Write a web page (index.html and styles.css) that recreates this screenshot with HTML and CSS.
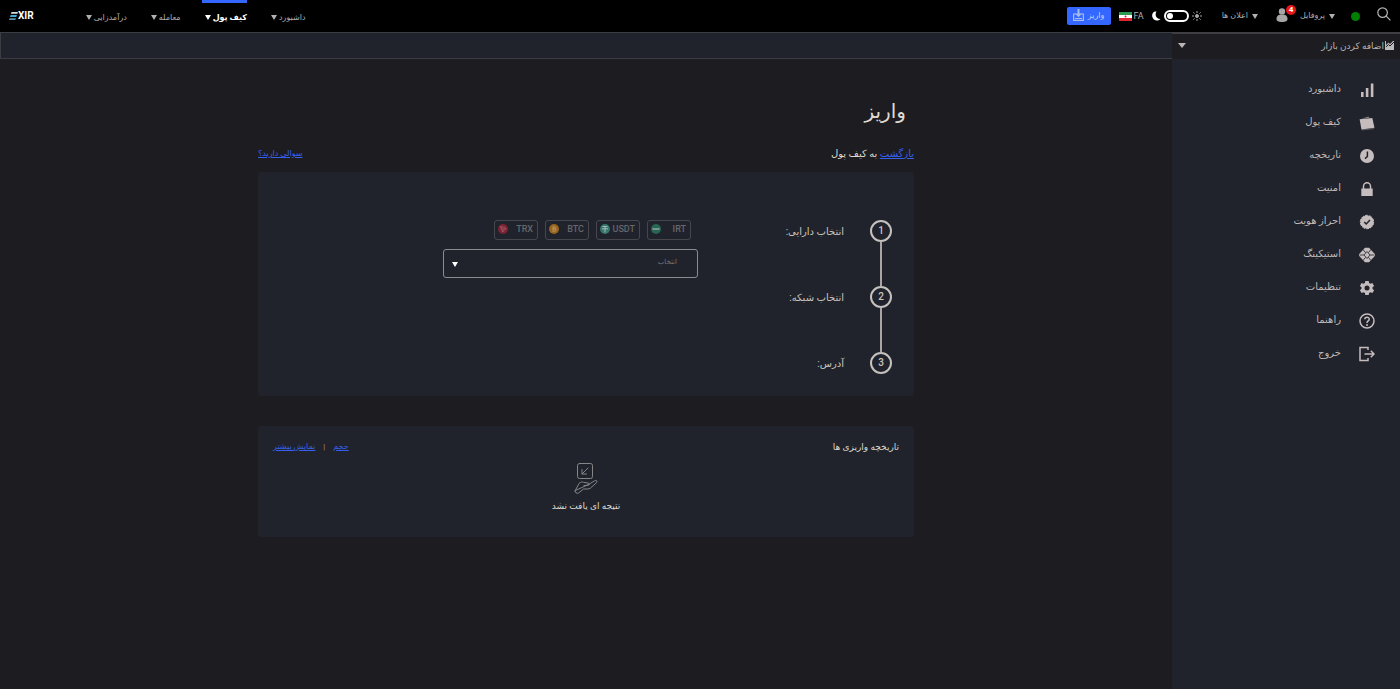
FILE: index.html
```html
<!DOCTYPE html>
<html lang="fa" dir="rtl">
<head>
    <meta charset="UTF-8">
    <meta name="viewport" content="width=device-width, initial-scale=1.0">
    <title>واریز</title>
    <link rel="stylesheet" href="styles.css">
</head>
<body>
    <!-- Top bar -->
    <header class="topbar">
        <div class="tools">
            <button type="button" class="icon-btn" aria-label="جستجو">
                <svg width="14" height="14" viewBox="0 0 14 14" fill="none" stroke="#b4b4b4" stroke-width="1.2"><circle cx="5.6" cy="5.6" r="4.8"/><path d="M9.2 9.2 13.4 13.4"/></svg>
            </button>
            <span class="status"></span>
            <div class="profile">
                <a href="#" class="menu-link">پروفایل</a>
                <span class="avatar">
                    <svg width="12" height="14" viewBox="0 0 12 14" fill="#a6a6a6"><circle cx="6" cy="3.4" r="3.2"/><path d="M0.5 11C0.5 7.8 2.5 6.4 6 6.4s5.500 1.400 5.500 4.600C11.500 13.200 9 14 6 14S0.500 13.200 0.500 11z"/></svg>
                    <span class="badge">4</span>
                </span>
            </div>
            <a href="#" class="menu-link alerts">اعلان ها</a>
            <div class="theme">
                <svg width="10" height="10" viewBox="0 0 10 10" fill="#a6a6a6" stroke="#a6a6a6" stroke-width="1"><circle cx="5" cy="5" r="1.500"/><path d="M5 0v2M5 8v2M0 5h2M8 5h2M1.400 1.400l1.200 1.200M7.400 7.400l1.200 1.200M8.600 1.400 7.400 2.600M2.600 7.400 1.400 8.600"/></svg>
                <input type="checkbox" class="switch" checked aria-label="حالت تاریک">
                <svg width="9" height="10" viewBox="0 0 9 10" fill="#fff"><path d="M4.500 0.500C1 0 -0.300 3 0.300 5.800 1 9.500 5.500 11 8.500 8 5.500 8 4 6.300 3.700 4.300 3.500 2.700 3.800 1.500 4.500 0.500z"/></svg>
            </div>
            <a href="#" class="lang">
                FA
                <svg width="13" height="9" viewBox="0 0 13 9"><path fill="#fff" d="M0 0h13v9H0z"/><path fill="#2c9a50" d="M0 0h13v3H0z"/><path fill="#dc2633" d="M0 6h13v3H0z"/><circle cx="6.500" cy="4.500" r="1" fill="#dc2633"/></svg>
            </a>
            <button type="button" class="deposit-btn">
                واریز
                <svg width="11" height="12" viewBox="0 0 11 12" fill="none" stroke="#a9bce8" stroke-width="1.200"><path d="M3 5H0.600v6.400h9.800V5H8M2 9.500h7"/><path fill="#a9bce8" stroke="none" d="M4.500 0h2v4.500H9L5.500 8.200 2 4.500h2.500z"/></svg>
            </button>
        </div>
        <nav class="main-nav">
            <a href="#">داشبورد</a>
            <a href="#" class="active">کیف پول</a>
            <a href="#">معامله</a>
            <a href="#">درآمدزایی</a>
        </nav>
        <a href="#" class="logo" dir="ltr">
            <svg width="9" height="8" viewBox="0 0 9 8"><path fill="#ddd" d="M2.500 0H9L8.400 1.800H1.900z"/><path fill="#3fa9d6" d="M1.600 3.100h6.300L7.300 4.900H1z"/><path fill="#5d8fa8" d="M0.600 6.200H7L6.400 8H0z"/></svg>XIR
        </a>
    </header>

    <div class="layout">
        <!-- Sidebar -->
        <aside class="sidebar">
            <button type="button" class="add-market">
                <svg width="9" height="9" viewBox="0 0 9 9"><path fill="#bbb" d="M0 0h1v4l2.500-2.500L5 3l3-3h1v9H0z"/><path fill="none" stroke="#1d1c20" stroke-width="1" d="M1 6l2.500-2.500L5 5l4-4"/></svg>
                <span>اضافه کردن بازار</span>
            </button>
            <nav class="side-nav">
                <a href="#">
                    <svg viewBox="0 0 16 16"><path d="M2 10h2.600v5H2zM6.800 6h2.600v9H6.800zM11.800 1.500h2.600V15h-2.600z"/></svg>
                    داشبورد
                </a>
                <a href="#">
                    <svg viewBox="0 0 16 16"><path d="M3 3.500 9.500 1.600l1 1.200L3 3.700z" opacity=".6"/><path d="M.6 4.200 13.300 3l2.200 9.800L2.500 14.400z"/><path d="M3 15l12-1.400" stroke="#c5bcbe" stroke-width=".6" opacity=".6"/></svg>
                    کیف پول
                </a>
                <a href="#">
                    <svg viewBox="0 0 16 16"><circle cx="8" cy="8" r="7"/><path class="cut" d="M8.400 3.500V8.500L6 10.600"/></svg>
                    تاریخچه
                </a>
                <a href="#">
                    <svg viewBox="0 0 16 16"><path d="M2.300 7.500h11.400V15H2.300z"/><path class="line" d="M4.500 8V5.200a3.500 3.500 0 0 1 7 0V8"/></svg>
                    امنیت
                </a>
                <a href="#">
                    <svg viewBox="0 0 16 16"><circle cx="8" cy="8" r="6.600"/><circle cx="8" cy="8" r="6.700" fill="none" stroke="#c5bcbe" stroke-dasharray="3.200 1"/><path class="cut" d="M5.200 8l2 2 3.800-4"/></svg>
                    احراز هویت
                </a>
                <a href="#">
                    <svg viewBox="0 0 16 16"><path d="M6 .8h4L13 4l2.800 3v2L13 12l-3 3.200H6L3 12 .2 9V7L3 4z"/><path class="cut thin" d="M8 4.500 11 8l-3 3.500L5 8zM4 2.500l2.600 3.200M12 2.500 9.400 5.700M4 13.500l2.600-3.200M12 13.500 9.400 10.300M1 8h4M11 8h4"/><circle cx="8" cy="8" r="1.200"/></svg>
                    استیکینگ
                </a>
                <a href="#">
                    <svg viewBox="0 0 16 16"><path fill-rule="evenodd" d="M6.300 1h3.400l.4 2 1.300.8 2-.8 1.700 2.900-1.600 1.400v1.500l1.600 1.400-1.700 2.900-2-.8-1.300.8-.4 2H6.300l-.4-2-1.300-.8-2 .8L.9 10.200l1.600-1.400V7.300L.9 5.900 2.600 3l2 .8L5.900 3zM8 5.500a2.500 2.500 0 1 0 0 5 2.500 2.500 0 0 0 0-5z"/></svg>
                    تنظیمات
                </a>
                <a href="#">
                    <svg viewBox="0 0 16 16"><circle class="line" cx="8" cy="8" r="7"/><path class="line" d="M5.800 6.300C5.900 3.600 10.300 3.700 10.200 6.200 10.200 7.900 8 7.900 8 9.900"/><circle cx="8" cy="11.900" r="1"/></svg>
                    راهنما
                </a>
                <a href="#">
                    <svg viewBox="0 0 16 16"><path class="line" d="M9 4V1.500H1v13h8V12M5.500 8H15M11.800 4.800 15 8l-3.200 3.200"/></svg>
                    خروج
                </a>
            </nav>
        </aside>

        <main class="content">
            <div class="market-bar"></div>
            <div class="page">
                <h1>واریز</h1>
                <div class="page-links">
                    <p><a href="#">بازگشت</a> به کیف پول</p>
                    <a href="#" class="help">سوالی دارید؟</a>
                </div>

                <!-- Deposit steps -->
                <section class="card steps-card">
                    <ol class="steps">
                        <li>
                            <span class="num">1</span>
                            <label for="asset">انتخاب دارایی:</label>
                            <div class="fields">
                                <div class="coins">
                                    <button type="button">IRT <svg width="10" height="10" viewBox="0 0 10 10"><circle cx="5" cy="5" r="5" fill="#286553"/><path stroke="#91aaa0" stroke-width="1.500" d="M1.500 5h7"/></svg></button>
                                    <button type="button">USDT <svg width="10" height="10" viewBox="0 0 10 10"><circle cx="5" cy="5" r="5" fill="#35766d"/><path fill="none" stroke="#a5bbb7" d="M2.500 2.500h5M5 2.500v6M2 4.800h6"/></svg></button>
                                    <button type="button">BTC <svg width="10" height="10" viewBox="0 0 10 10"><circle cx="5" cy="5" r="5" fill="#976520"/><path fill="none" stroke="#c09d69" stroke-width=".8" d="M4 2.500v5M4 2.800h1.600c1.400 0 1.400 2 0 2H4h1.900c1.500 0 1.500 2.400 0 2.400H4"/></svg></button>
                                    <button type="button">TRX <svg width="10" height="10" viewBox="0 0 10 10"><circle cx="5" cy="5" r="5" fill="#7c2233"/><path fill="none" stroke="#a5606c" stroke-width=".7" d="M2.300 2.500l4.300.8L8 4.500 4.700 8zM4.900 5 8 4.500M4.900 5 2.300 2.500M4.900 5 4.700 8"/></svg></button>
                                </div>
                                <div class="select-box">
                                    <select id="asset">
                                        <option>انتخاب</option>
                                    </select>
                                </div>
                            </div>
                        </li>
                        <li>
                            <span class="num">2</span>
                            <span class="step-label">انتخاب شبکه:</span>
                        </li>
                        <li>
                            <span class="num">3</span>
                            <span class="step-label">آدرس:</span>
                        </li>
                    </ol>
                </section>

                <!-- Deposit history -->
                <section class="card history">
                    <div class="history-head">
                        <h2>تاریخچه واریزی ها</h2>
                        <div class="history-links">
                            <a href="#">حجم</a>
                            <span>|</span>
                            <a href="#">نمایش بیشتر</a>
                        </div>
                    </div>
                    <div class="empty">
                        <svg width="24" height="32" viewBox="0 0 24 32" fill="none" stroke="#85858a" stroke-width="1" stroke-linejoin="round" stroke-linecap="round"><rect x="3.500" y="1.500" width="15" height="15" rx="2"/><path d="M14 6l-6 6M8 7.500V12h4.500"/><path d="M1 29l4-7.500c1.500-1.700 3-1.700 4.500-1.200l4.500.7c1.800.5 1.800 2 0 2.200l-4 .3M15.500 22l5-3.200c2-1 3.200.3 2 1.900l-6 5.300c-1 .8-2 1-3.500 1H9.500l-5 4c-1.500 1-3.800-.5-3.500-2z"/></svg>
                        <p>نتیجه ای یافت نشد</p>
                    </div>
                </section>
            </div>
        </main>
    </div>
</body>
</html>
```

FILE: styles.css
```css
* {
    box-sizing: border-box;
}

body {
    margin: 0;
    min-height: 100vh;
    display: flex;
    flex-direction: column;
    background-color: #1d1c20;
    color: #c9c5bf;
    font-family: Roboto, "DejaVu Sans", sans-serif;
    font-size: 10px;
    line-height: 16px;
}

button, select {
    font-family: inherit;
    cursor: pointer;
}

svg {
    display: block;
    flex-shrink: 0;
}

a {
    color: #3560ee;
}

/* Top bar */
.topbar {
    display: flex;
    align-items: center;
    height: 32px;
    padding: 0 9px;
    background-color: #000;
}

.topbar a {
    color: #b0b0b0;
    text-decoration: none;
    white-space: nowrap;
}

.tools {
    display: flex;
    align-items: center;
    margin-left: auto;
    font-size: 8px;
}

.icon-btn {
    padding: 0 0 4px;
    border: none;
    background: none;
}

.status {
    width: 9px;
    height: 9px;
    margin: 0 17px 0 16px;
    border-radius: 50%;
    background-color: #008000;
}

.profile {
    display: flex;
    align-items: center;
    gap: 12px;
}

.menu-link, .main-nav a {
    display: flex;
    align-items: center;
    gap: 2px;
}

.menu-link {
    gap: 4px;
}

.menu-link::before, .main-nav a::after, .add-market::after, .select-box::after {
    content: "";
    border: 3px solid transparent;
    border-top: 5px solid currentColor;
    border-bottom: 0;
}

.avatar {
    position: relative;
    margin-bottom: 3px;
}

.badge {
    position: absolute;
    top: -3px;
    left: 10px;
    width: 10px;
    height: 10px;
    border-radius: 50%;
    background-color: #e8141c;
    color: #fff;
    font-size: 8px;
    font-weight: bold;
    line-height: 10px;
    text-align: center;
}

.alerts {
    margin-right: 18px;
}

.theme {
    display: flex;
    align-items: center;
    gap: 3px;
    margin-right: 20px;
}

.switch {
    appearance: none;
    display: flex;
    align-items: center;
    justify-content: flex-end;
    width: 25px;
    height: 12px;
    margin: 0;
    padding: 0 1px;
    border: 2px solid #fff;
    border-radius: 6px;
}

.switch::before {
    content: "";
    width: 6px;
    height: 6px;
    border-radius: 50%;
    background-color: #fff;
}

.lang {
    display: flex;
    align-items: center;
    gap: 2px;
    margin: 0 8px;
    font-size: 9px;
}

.deposit-btn {
    display: flex;
    align-items: center;
    justify-content: center;
    gap: 4px;
    width: 44px;
    height: 18px;
    padding: 0 0 2px;
    border: none;
    border-radius: 2px;
    background-color: #3367ff;
    color: #c5d2f5;
    font-size: 8px;
}

.main-nav {
    display: flex;
    align-self: stretch;
    gap: 21px;
    margin-left: 49px;
    font-size: 8px;
}

.main-nav a {
    padding: 0 0 0 3px;
    border-top: 3px solid transparent;
}

.main-nav a.active {
    border-top-color: #3367ff;
    color: #fff;
    font-weight: bold;
}

.topbar .logo {
    display: flex;
    align-items: center;
    color: #fff;
    font-size: 10px;
    font-weight: bold;
}

/* Layout */
.layout {
    flex: 1;
    display: flex;
}

.sidebar {
    width: 228px;
    flex-shrink: 0;
    border-top: 2px solid #3f3e42;
    background-color: #20232b;
}

.add-market {
    display: flex;
    align-items: center;
    gap: 1px;
    width: 100%;
    height: 25px;
    padding: 0 6px 2px;
    border: none;
    background-color: #1d1c20;
    color: #b9b5b3;
    font-size: 9px;
}

.add-market::after {
    margin-right: auto;
    border-width: 5px 4px 0;
}

.side-nav {
    display: flex;
    flex-direction: column;
    padding-top: 13px;
}

.side-nav a {
    display: flex;
    align-items: center;
    gap: 18px;
    height: 33px;
    padding-right: 25px;
    color: #bfb8b8;
    text-decoration: none;
}

.side-nav svg {
    width: 16px;
    height: 16px;
    margin-top: 3px;
    fill: #c5bcbe;
}

.side-nav .line {
    fill: none;
    stroke: #c5bcbe;
    stroke-width: 1.5;
}

.side-nav .cut {
    fill: none;
    stroke: #20232b;
    stroke-width: 1.5;
}

.side-nav .thin {
    stroke-width: 0.8;
}

/* Content */
.content {
    flex: 1;
    min-width: 0;
}

.market-bar {
    height: 27px;
    border: 1px solid #3b3d43;
    border-right: none;
    background-color: #20232b;
}

.page {
    max-width: 656px;
    margin: 0 auto;
    padding-top: 36px;
}

h1 {
    margin: 0;
    padding-right: 8px;
    color: #dedbd2;
    font-size: 20px;
    font-weight: normal;
    line-height: 32px;
}

.page-links {
    display: flex;
    justify-content: space-between;
    align-items: center;
    margin: 19px 0 10px;
}

.page-links p {
    margin: 0;
    color: #dedbd2;
}

.help {
    font-size: 8px;
}

.card {
    border-radius: 3px;
    background-color: #20232b;
}

/* Steps */
.steps-card {
    padding: 48px 22px 22px;
}

.steps {
    margin: 0;
    padding: 0;
    list-style: none;
}

.steps li {
    position: relative;
    display: flex;
    height: 66px;
    line-height: 24px;
}

.steps li:last-child {
    height: 22px;
}

/* Line between two numbers */
.steps li:not(:last-child)::before {
    content: "";
    position: absolute;
    top: 22px;
    bottom: 0;
    right: 10px;
    width: 2px;
    background-color: #aaa5a4;
}

.num {
    width: 22px;
    height: 22px;
    margin-left: 26px;
    border: 2px solid #c5c1be;
    border-radius: 50%;
    font-weight: 500;
    line-height: 18px;
    text-align: center;
}

.steps label, .step-label {
    width: 146px;
}

.fields {
    width: 255px;
}

.coins {
    display: flex;
    gap: 7px;
    margin: 0 7px 9px;
}

.coins button {
    display: flex;
    align-items: center;
    justify-content: space-between;
    width: 44px;
    height: 20px;
    padding: 0 4px 2px 3px;
    border: 1px solid #45474d;
    border-radius: 3px;
    background: none;
    color: #66676b;
    font-size: 9px;
    font-weight: 500;
}

.select-box {
    position: relative;
}

.select-box select {
    appearance: none;
    display: block;
    width: 100%;
    height: 29px;
    padding: 0 20px 3px;
    border: 1px solid #8b8c90;
    border-radius: 3px;
    background: none;
    color: #77787c;
    font-size: 7px;
}

.select-box::after {
    position: absolute;
    top: 13px;
    left: 9px;
    color: #fff;
    pointer-events: none;
}

/* History */
.history {
    margin-top: 30px;
    padding: 13px 15px 23px;
}

.history-head {
    display: flex;
    justify-content: space-between;
}

.history h2 {
    margin: 0;
    color: #dedbd2;
    font-size: 9px;
    font-weight: normal;
    line-height: 16px;
}

.history-links {
    display: flex;
    gap: 8px;
    font-size: 8px;
}

.history-links span {
    color: #b48a86;
}

.empty {
    display: flex;
    flex-direction: column;
    align-items: center;
    gap: 4px;
    padding-top: 7px;
}

.empty p {
    margin: 0;
    color: #dedbd2;
    font-size: 9px;
}
```
